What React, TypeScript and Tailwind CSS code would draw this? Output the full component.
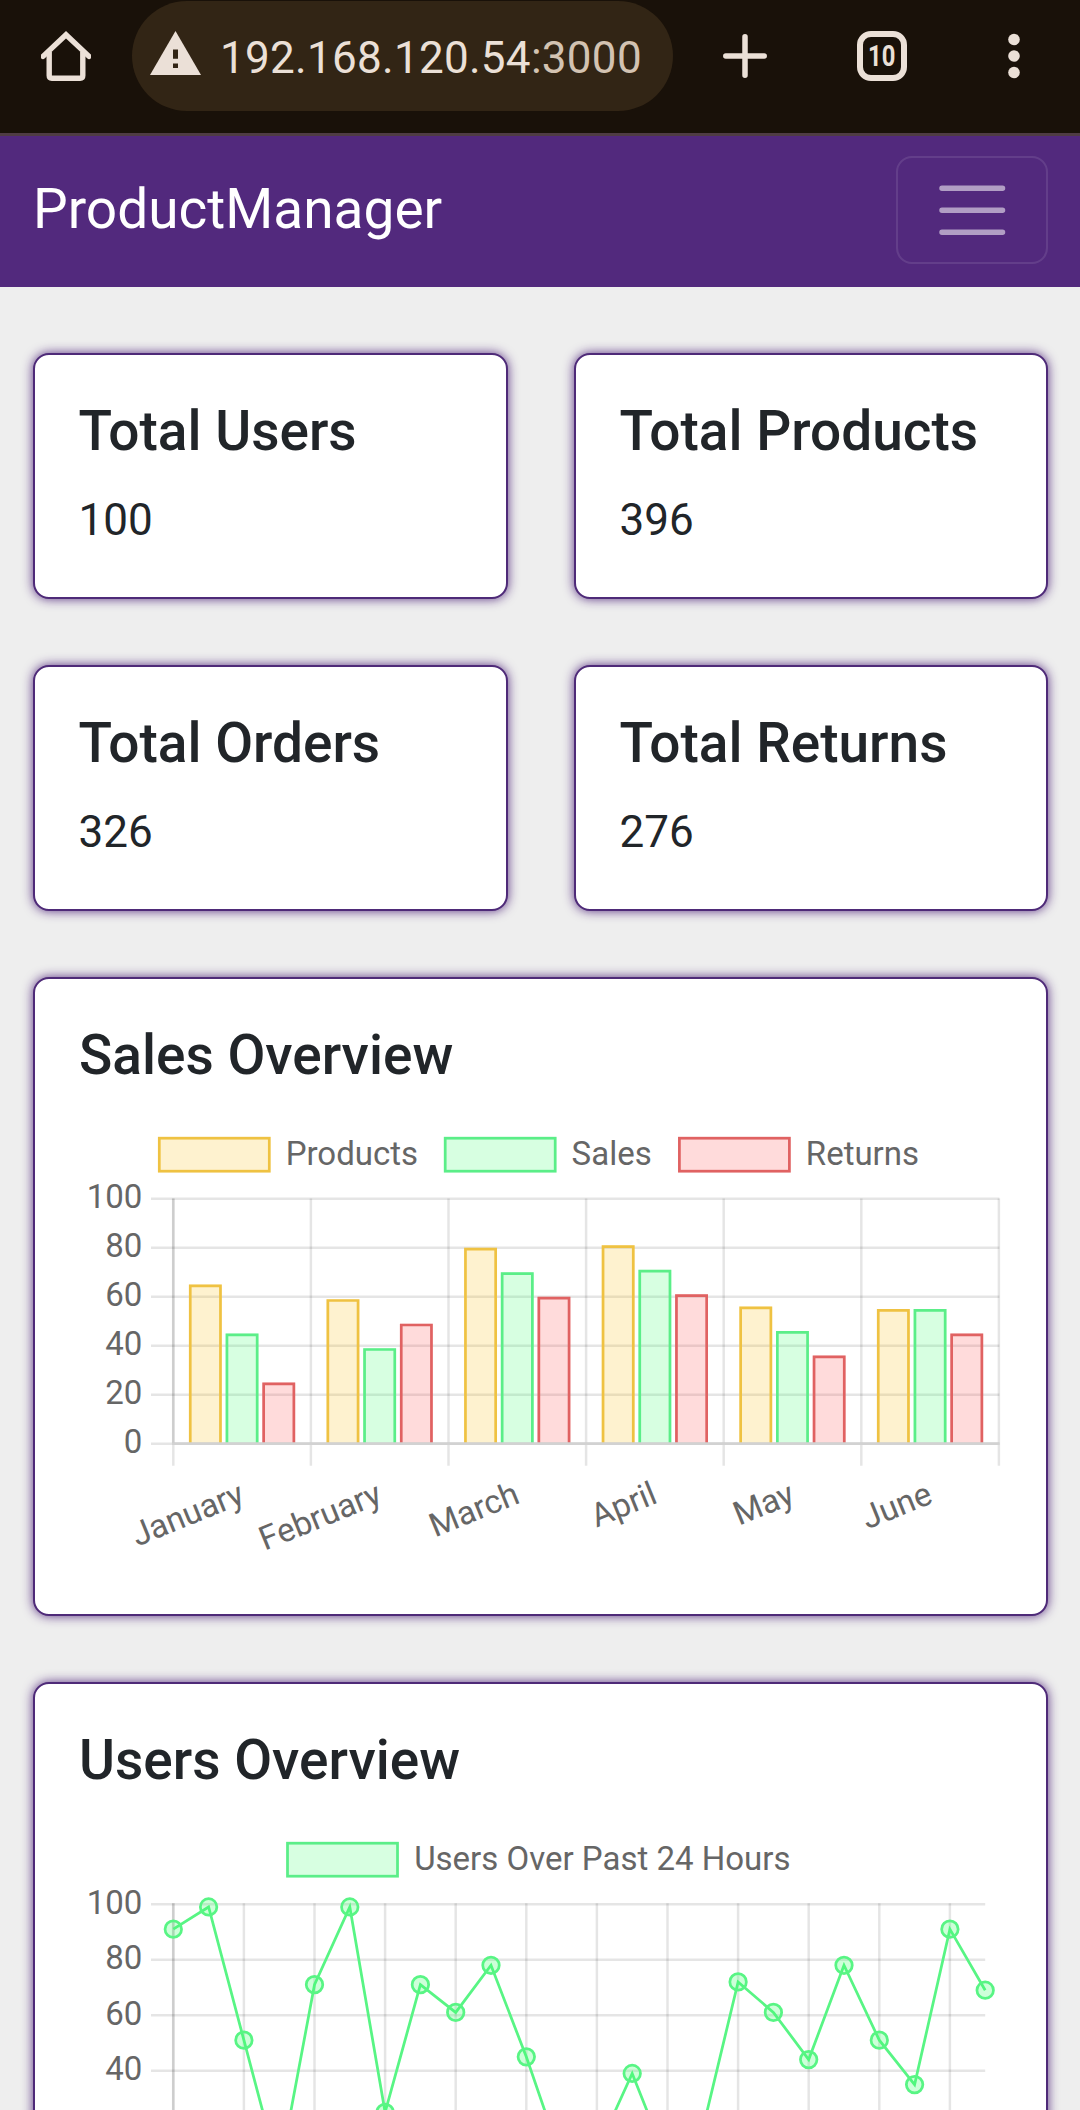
import React from "react";

const GRID = "rgba(0,0,0,0.1)";
const CARD =
  "rounded-[16px] border-2 border-[#4e2a78] bg-white shadow-[0_0_11px_rgba(82,41,125,0.95)]";

const months = ["January", "February", "March", "April", "May", "June"];
const series = [
  { name: "Products", stroke: "#efc242", fill: "#fbbf0f", legendX: 159.3, values: [65, 59, 80, 81, 56, 55] },
  { name: "Sales", stroke: "#5bee88", fill: "#37ff69", legendX: 445.2, values: [45, 39, 70, 71, 46, 55] },
  { name: "Returns", stroke: "#e06262", fill: "#ff4a4a", legendX: 679.4, values: [25, 49, 60, 61, 36, 45] },
];
const users = [91, 99, 51, 3, 71, 99, 25, 71, 61, 78, 45, 8, 11, 39, 7, 19, 72, 61, 44, 78, 51, 35, 91, 69];

function LegendBox({ x, y, stroke, fill }: { x: number; y: number; stroke: string; fill: string }) {
  return (
    <rect x={x} y={y} width={110} height={33} fill={fill} fillOpacity={0.2} stroke={stroke} strokeWidth={2.75} />
  );
}

function StatCard({ title, value }: { title: string; value: number }) {
  return (
    <div className={`${CARD} h-[246px] px-[43.5px] pt-[43px]`}>
      <h5 className="mb-[23px] text-[55px] leading-[66px] font-medium whitespace-nowrap">{title}</h5>
      <p className="text-[44px] leading-[66px]">{value}</p>
    </div>
  );
}

function SalesChart() {
  const left = 173.3;
  const step = 137.6;
  const base = 1443.7;
  const unit = 2.449;
  const right = left + step * 6;
  return (
    <svg viewBox="79 1111 922 458" className="block h-[458px] w-[922px] overflow-visible" fontSize={33} fill="#666">
      {series.map((s) => (
        <g key={s.name}>
          <LegendBox x={s.legendX} y={1138.2} stroke={s.stroke} fill={s.fill} />
          <text x={s.legendX + 126.4} y={1165}>{s.name}</text>
        </g>
      ))}
      {[0, 20, 40, 60, 80, 100].map((v) => (
        <g key={v}>
          <line x1={151} x2={right + 0.5} y1={base - v * unit} y2={base - v * unit} stroke={GRID} strokeWidth={2.5} />
          <text x={142.3} y={base - v * unit + 9.4} textAnchor="end">{v}</text>
        </g>
      ))}
      {[0, 1, 2, 3, 4, 5, 6].map((i) => (
        <line key={i} x1={left + i * step} x2={left + i * step} y1={1198.5} y2={1465.7} stroke={GRID} strokeWidth={2.5} />
      ))}
      {series.map((s, k) =>
        s.values.map((v, i) => {
          const x = left + i * step + 13.76 + k * 36.7 + 1.9;
          const top = base - v * unit;
          return (
            <g key={`${s.name}-${i}`}>
              <rect x={x} y={top} width={32.8} height={base - top} fill={s.fill} fillOpacity={0.2} />
              <path
                d={`M${x + 1.3} ${base}V${top + 1.3}H${x + 31.5}V${base}`}
                fill="none"
                stroke={s.stroke}
                strokeWidth={2.7}
              />
            </g>
          );
        }),
      )}
      <line x1={left} x2={left} y1={1198.5} y2={base} stroke={GRID} strokeWidth={2.75} />
      <line x1={left - 1.3} x2={right + 0.5} y1={base} y2={base} stroke="#d2d2d2" strokeWidth={2.75} />
      {months.map((m, i) => (
        <text
          key={m}
          textAnchor="end"
          transform={`translate(${left + (i + 0.5) * step + 4} 1502.3) rotate(-22.2)`}
        >
          {m}
        </text>
      ))}
    </svg>
  );
}

function UsersChart() {
  const left = 173.3;
  const step = 35.3;
  const top = 1904.2;
  const unit = 2.775;
  const right = left + step * 23;
  const pts = users.map((v, i) => [left + i * step, top + (100 - v) * unit]);
  return (
    <svg viewBox="79 1816 922 458" className="block h-[458px] w-[922px] overflow-visible" fontSize={33} fill="#666">
      <LegendBox x={287.5} y={1843.2} stroke="#5bee88" fill="#37ff69" />
      <text x={414.2} y={1870}>Users Over Past 24 Hours</text>
      {[40, 60, 80, 100].map((v) => {
        const y = top + (100 - v) * unit;
        return (
          <g key={v}>
            <line x1={151} x2={right} y1={y} y2={y} stroke={GRID} strokeWidth={2.5} />
            <text x={142.3} y={y + 9.4} textAnchor="end">{v}</text>
          </g>
        );
      })}
      {Array.from({ length: 12 }, (_, i) => (
        <line key={i} x1={left + i * 2 * step} x2={left + i * 2 * step} y1={top - 1} y2={2200} stroke={GRID} strokeWidth={2.5} />
      ))}
      <line x1={left} x2={left} y1={top - 1} y2={2200} stroke={GRID} strokeWidth={2.75} />
      <polyline points={pts.map((p) => p.join(",")).join(" ")} fill="none" stroke="#58f584" strokeWidth={2.75} />
      {pts.map(([x, y], i) => (
        <circle key={i} cx={x} cy={y} r={8.25} fill="#37ff69" fillOpacity={0.25} stroke="#58f584" strokeWidth={2.75} />
      ))}
    </svg>
  );
}

function BrowserBar() {
  return (
    <div className="flex h-[136px] items-start border-b-[3px] border-[#4f3c44] bg-[#191109] pt-px text-[#ebe0d7]">
      <div className="flex h-[110px] w-[132px] items-center pl-[41px]">
        <svg viewBox="0 0 50 50" className="h-[50px] w-[50px]" fill="none" stroke="currentColor" strokeWidth={5.4}>
          <path d="M2 25.4 25 3.8 48 25.4" strokeLinecap="round" />
          <path d="M8.2 21V44.6Q8.2 47.2 10.8 47.2H39.2Q41.8 47.2 41.8 44.6V21" />
        </svg>
      </div>
      <div className="flex h-[110px] w-[541px] items-center rounded-full bg-[#322515] pl-[18px]">
        <svg viewBox="0 0 51 44" className="-mt-[6px] h-[44px] w-[51px]">
          <path d="M25.5 0 51 44H0Z" fill="currentColor" />
          <path d="M23 18.5h5v9.3h-5zM23 32.5h5v4.6h-5z" fill="#322515" />
        </svg>
        <span className="mt-[3px] ml-[19px] text-[44px] leading-[66px] tracking-[0.29px] whitespace-nowrap">
          192.168.120.54<span className="text-[#d3c3b2]">:3000</span>
        </span>
      </div>
      <div className="flex h-[110px] items-center pl-[50px]">
        <svg viewBox="0 0 44 44" className="h-[44px] w-[44px]" stroke="currentColor" strokeWidth={5.5} strokeLinecap="round">
          <path d="M22 2.8V41.2M2.8 22H41.2" />
        </svg>
        <div className="ml-[90px] flex h-[50px] w-[50px] items-center justify-center rounded-[14px] border-[6px] border-current">
          <span className="scale-x-[0.82] text-[29px] leading-none font-bold">10</span>
        </div>
        <svg viewBox="0 0 12 46" className="ml-[101px] h-[46px] w-[12px]" fill="currentColor">
          <circle cx={6} cy={6.5} r={5.8} />
          <circle cx={6} cy={23} r={5.8} />
          <circle cx={6} cy={39.5} r={5.8} />
        </svg>
      </div>
    </div>
  );
}

export default function App() {
  return (
    <div className="h-[2110px] w-[1080px] overflow-hidden bg-[#eeeeee] font-['Roboto',sans-serif] text-[#212529]">
      <BrowserBar />
      <nav className="flex h-[151px] items-start justify-between bg-[#52297d] pt-[20px] pr-[32px] pl-[33px]">
        <span className="mt-[12px] text-[55px] leading-[82px] text-white">ProductManager</span>
        <button className="flex h-[108px] w-[152px] items-center justify-center rounded-[16px] border-2 border-white/10">
          <svg viewBox="0 0 30 30" className="h-[82.5px] w-[82.5px]" stroke="white" strokeOpacity={0.55} strokeWidth={2} strokeLinecap="round">
            <path d="M4 7h22M4 15h22M4 23h22" />
          </svg>
        </button>
      </nav>
      <main className="flex flex-col gap-[66px] pt-[66px] pr-[32px] pl-[33px]">
        <div className="grid grid-cols-[475px_474px] gap-[66px]">
          <StatCard title="Total Users" value={100} />
          <StatCard title="Total Products" value={396} />
          <StatCard title="Total Orders" value={326} />
          <StatCard title="Total Returns" value={276} />
        </div>
        <section className={`${CARD} h-[639px] px-[44px] pt-[43px]`}>
          <h5 className="mb-[23px] text-[55px] leading-[66px] font-medium">Sales Overview</h5>
          <SalesChart />
        </section>
        <section className={`${CARD} h-[639px] px-[44px] pt-[43px]`}>
          <h5 className="mb-[23px] text-[55px] leading-[66px] font-medium">Users Overview</h5>
          <UsersChart />
        </section>
      </main>
    </div>
  );
}
